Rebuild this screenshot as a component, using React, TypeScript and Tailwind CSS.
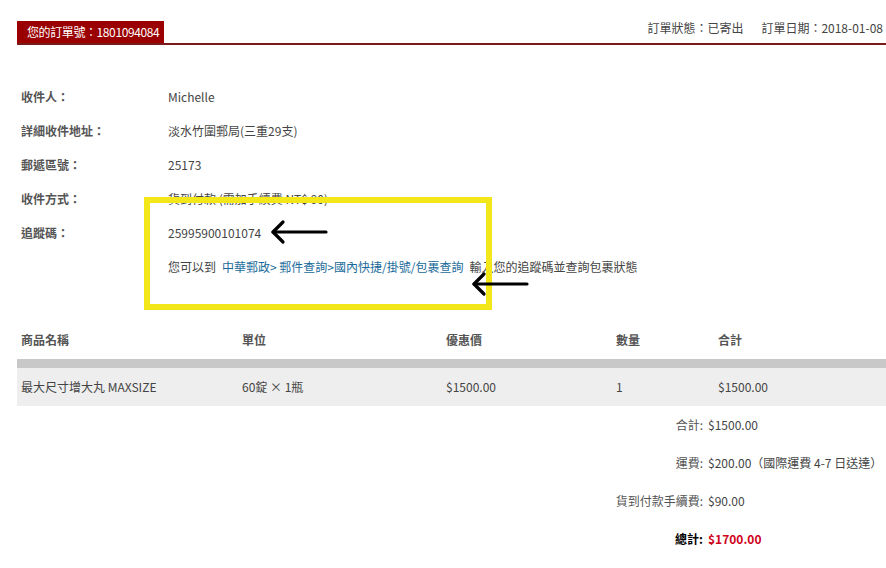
import type { ReactNode } from 'react'

const FONT = { fontFamily: '"Noto Sans CJK TC", "Noto Sans", sans-serif' }

const receiver: { label: string; value: ReactNode }[] = [
  { label: '收件人：', value: 'Michelle' },
  { label: '詳細收件地址：', value: '淡水竹圍郵局(三重29支)' },
  { label: '郵遞區號：', value: '25173' },
  { label: '收件方式：', value: '貨到付款 (需加手續費 NT$ 90)' },
  { label: '追蹤碼：', value: '25995900101074' },
]

const columns = ['商品名稱', '單位', '優惠價', '數量', '合計']
const item = ['最大尺寸增大丸 MAXSIZE', '60錠 × 1瓶', '$1500.00', '1', '$1500.00']

const summary = [
  { label: '合計:', value: '$1500.00' },
  { label: '運費:', value: '$200.00（國際運費 4-7 日送達）' },
  { label: '貨到付款手續費:', value: '$90.00' },
]

function Arrow({ className }: { className: string }) {
  return (
    <svg className={`absolute ${className}`} width="58" height="26" viewBox="0 0 58 26" fill="none">
      <path d="M3 13 H56" stroke="#000" strokeWidth="3.2" strokeLinecap="round" />
      <path d="M13 3 L3 13 L13 23" stroke="#000" strokeWidth="3.2" strokeLinecap="round" strokeLinejoin="round" />
    </svg>
  )
}

export default function App() {
  return (
    <div className="relative min-h-screen w-full overflow-hidden bg-white pl-[17px] text-[12px] text-[#555]" style={FONT}>
      {/* order header */}
      <div className="flex items-start justify-between border-b-2 border-[#7b1a1a] pt-[21px]">
        <div className="flex h-[22px] items-center bg-[#9a0000] pl-[10px] pr-[5px] tracking-[-0.4px] text-white">
          您的訂單號：1801094084
        </div>
        <div className="-mt-[2px] flex gap-[18px] pr-[3px] text-[#444]">
          <span>訂單狀態：已寄出</span>
          <span>訂單日期：2018-01-08</span>
        </div>
      </div>

      {/* receiver info */}
      <div className="mt-[35px] pl-[4px]">
        {receiver.map((r) => (
          <div key={r.label} className="flex h-[34px] items-center">
            <div className="w-[147px] font-bold text-[#555]">{r.label}</div>
            <div className="text-[#444]">{r.value}</div>
          </div>
        ))}
        <div className="flex h-[34px] items-center pl-[147px] text-[#444]">
          <span>您可以到</span>
          <span className="ml-[6px] text-[#186a9a]">中華郵政&gt; 郵件查詢&gt;國內快捷/掛號/包裹查詢</span>
          <span className="ml-[6px]">輸入您的追蹤碼並查詢包裹狀態</span>
        </div>
      </div>

      {/* product table */}
      <div className="mt-[37px]">
        <div className="grid h-[38px] grid-cols-[221px_204px_170px_102px_1fr] items-center pl-[4px] font-bold text-[#555]">
          {columns.map((c) => (
            <div key={c}>{c}</div>
          ))}
        </div>
        <div className="h-[9px] bg-[#c8c8c8]" />
        <div className="grid h-[38px] grid-cols-[221px_204px_170px_102px_1fr] items-center bg-[#eeeeee] pl-[4px] text-[#444]">
          {item.map((c, i) => (
            <div key={i}>{c}</div>
          ))}
        </div>
      </div>

      {/* totals */}
      <div className="grid grid-cols-[1fr_178px] gap-x-[5px]">
        {summary.map((s) => (
          <div key={s.label} className="contents">
            <div className="flex h-[38px] items-center justify-end text-[#555]">{s.label}</div>
            <div className="flex h-[38px] items-center whitespace-nowrap text-[#444]">{s.value}</div>
          </div>
        ))}
        <div className="flex h-[38px] items-center justify-end font-bold text-black">總計:</div>
        <div className="flex h-[38px] items-center font-bold text-[#d0021b]">$1700.00</div>
      </div>

      {/* highlight annotation */}
      <div className="absolute left-[144px] top-[197px] h-[113px] w-[348px] border-[6px] border-[#f4e719]" />
      <Arrow className="left-[270px] top-[219px]" />
      <Arrow className="left-[471px] top-[271px]" />
    </div>
  )
}
